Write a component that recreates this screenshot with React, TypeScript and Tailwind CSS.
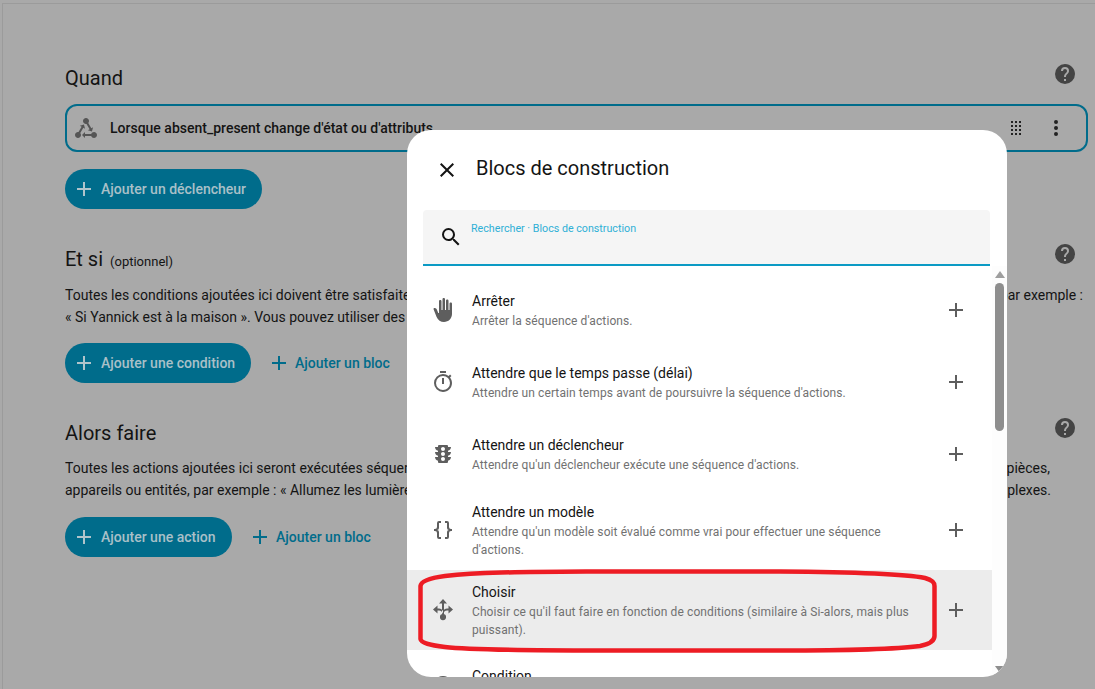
const mdi = {
  plus: "M19,13H13V19H11V13H5V11H11V5H13V11H19V13Z",
  help: "M15.07,11.25L14.17,12.17C13.45,12.89 13,13.5 13,15H11V14.5C11,13.39 11.45,12.39 12.17,11.67L13.41,10.41C13.78,10.05 14,9.55 14,9C14,7.89 13.1,7 12,7A2,2 0 0,0 10,9H8A4,4 0 0,1 12,5A4,4 0 0,1 16,9C16,9.88 15.64,10.67 15.07,11.25M13,19H11V17H13M12,2A10,10 0 0,0 2,12A10,10 0 0,0 12,22A10,10 0 0,0 22,12C22,6.47 17.5,2 12,2Z",
  dots: "M12,16A2,2 0 0,1 14,18A2,2 0 0,1 12,20A2,2 0 0,1 10,18A2,2 0 0,1 12,16M12,10A2,2 0 0,1 14,12A2,2 0 0,1 12,14A2,2 0 0,1 10,12A2,2 0 0,1 12,10M12,4A2,2 0 0,1 14,6A2,2 0 0,1 12,8A2,2 0 0,1 10,6A2,2 0 0,1 12,4Z",
  state: "M6.27 17.05C6.72 17.58 7 18.25 7 19C7 20.66 5.66 22 4 22S1 20.66 1 19 2.34 16 4 16C4.18 16 4.36 16 4.53 16.05L7.6 10.69L5.86 9.7L9.95 8.58L11.07 12.67L9.33 11.68L6.27 17.05M20 16C18.7 16 17.6 16.84 17.18 18H11V16L8 19L11 22V20H17.18C17.6 21.16 18.7 22 20 22C21.66 22 23 20.66 23 19S21.66 16 20 16M12 8C12.18 8 12.36 8 12.53 7.95L15.6 13.31L13.86 14.3L17.95 15.42L19.07 11.33L17.33 12.32L14.27 6.95C14.72 6.42 15 5.75 15 5C15 3.34 13.66 2 12 2S9 3.34 9 5 10.34 8 12 8Z",
  close: "M19,6.41L17.59,5L12,10.59L6.41,5L5,6.41L10.59,12L5,17.59L6.41,19L12,13.41L17.59,19L19,17.59L13.41,12L19,6.41Z",
  search: "M9.5,3A6.5,6.5 0 0,1 16,9.5C16,11.11 15.41,12.59 14.44,13.73L14.71,14H15.5L20.5,19L19,20.5L14,15.5V14.71L13.73,14.44C12.59,15.41 11.11,16 9.5,16A6.5,6.5 0 0,1 3,9.5A6.5,6.5 0 0,1 9.5,3M9.5,5C7,5 5,7 5,9.5C5,12 7,14 9.5,14C12,14 14,12 14,9.5C14,7 12,5 9.5,5Z",
  hand: "M13 24C9.74 24 6.81 22 5.6 19L2.57 11.37C2.26 10.58 3 9.79 3.81 10.05L4.6 10.31C5.16 10.5 5.62 10.92 5.84 11.47L7.25 15H8V3.25C8 2.56 8.56 2 9.25 2S10.5 2.56 10.5 3.25V12H11.5V1.25C11.5 .56 12.06 0 12.75 0S14 .56 14 1.25V12H15V2.75C15 2.06 15.56 1.5 16.25 1.5C16.94 1.5 17.5 2.06 17.5 2.75V12H18.5V5.75C18.5 5.06 19.06 4.5 19.75 4.5S21 5.06 21 5.75V16C21 20.42 17.42 24 13 24Z",
  timer: "M12,20A7,7 0 0,1 5,13A7,7 0 0,1 12,6A7,7 0 0,1 19,13A7,7 0 0,1 12,20M19.03,7.39L20.45,5.97C20,5.46 19.55,5 19.04,4.56L17.62,6C16.07,4.74 14.12,4 12,4A9,9 0 0,0 3,13A9,9 0 0,0 12,22C17,22 21,17.97 21,13C21,10.88 20.26,8.93 19.03,7.39M11,14H13V8H11M15,1H9V3H15V1Z",
  traffic: "M12,9A2,2 0 0,1 10,7C10,5.89 10.9,5 12,5C13.11,5 14,5.89 14,7A2,2 0 0,1 12,9M12,14A2,2 0 0,1 10,12C10,10.89 10.9,10 12,10C13.11,10 14,10.89 14,12A2,2 0 0,1 12,14M12,19A2,2 0 0,1 10,17C10,15.89 10.9,15 12,15C13.11,15 14,15.89 14,17A2,2 0 0,1 12,19M20,10H17V8.86C18.72,8.41 20,6.86 20,5H17V4A1,1 0 0,0 16,3H8A1,1 0 0,0 7,4V5H4C4,6.86 5.28,8.41 7,8.86V10H4C4,11.86 5.28,13.41 7,13.86V15H4C4,16.86 5.28,18.41 7,18.86V20A1,1 0 0,0 8,21H16A1,1 0 0,0 17,20V18.86C18.72,18.41 20,16.86 20,15H17V13.86C18.72,13.41 20,11.86 20,10Z",
  braces: "M8,3A2,2 0 0,0 6,5V9A2,2 0 0,1 4,11H3V13H4A2,2 0 0,1 6,15V19A2,2 0 0,0 8,21H10V19H8V14A2,2 0 0,0 6,12A2,2 0 0,0 8,10V5H10V3M16,3A2,2 0 0,1 18,5V9A2,2 0 0,0 20,11H21V13H20A2,2 0 0,0 18,15V19A2,2 0 0,1 16,21H14V19H16V14A2,2 0 0,1 18,12A2,2 0 0,1 16,10V5H14V3H16Z",
  choose: "M12 1L8 5.5H11V16.5H13V5.5H16ZM2 11.5L6.5 7.5V10.5H8C10 10.5 11 11.7 12 13V15.8C11 13.7 10 12.5 8 12.5H6.5V15.5ZM22 11.5L17.5 7.5V10.5H16C14 10.5 13 11.7 12 13V15.8C13 13.7 14 12.5 16 12.5H17.5V15.5ZM12 16A3.1 3.1 0 1 0 12 22.2A3.1 3.1 0 1 0 12 16Z",
  drag: "M7,19V17H9V19H7M11,19V17H13V19H11M15,19V17H17V19H15M7,15V13H9V15H7M11,15V13H13V15H11M15,15V13H17V15H15M7,11V9H9V11H7M11,11V9H13V11H11M15,11V9H17V11H15M7,7V5H9V7H7M11,7V5H13V7H11M15,7V5H17V7H15Z",
};

function Icon({ d, className }: { d: string; className: string }) {
  return (
    <svg viewBox="0 0 24 24" className={className} fill="currentColor">
      <path d={d} />
    </svg>
  );
}

function Filled({ label, width }: { label: string; width: string }) {
  return (
    <div className={`h-10 rounded-full bg-[#006c8b] text-[#a9c0c8] flex items-center pl-2 ${width}`}>
      <Icon d={mdi.plus} className="w-6 h-6 text-[#b0c4cb] mr-[4px] ml-[-1px]" />
      <span className="text-sm font-medium whitespace-nowrap ml-[1px]">{label}</span>
    </div>
  );
}

function TextBtn({ label }: { label: string }) {
  return (
    <div className="h-10 ml-[16px] flex items-center text-[#006c8b]">
      <Icon d={mdi.plus} className="w-6 h-6 mr-[3px]" />
      <span className="text-sm font-medium whitespace-nowrap ml-[1px]">{label}</span>
    </div>
  );
}

const items = [
  { icon: mdi.hand, title: "Arrêter", lines: ["Arrêter la séquence d'actions."], h: "h-[72px]" },
  { icon: mdi.timer, title: "Attendre que le temps passe (délai)", lines: ["Attendre un certain temps avant de poursuivre la séquence d'actions."], h: "h-[72px]" },
  { icon: mdi.traffic, title: "Attendre un déclencheur", lines: ["Attendre qu'un déclencheur exécute une séquence d'actions."], h: "h-[72px]" },
  { icon: mdi.braces, title: "Attendre un modèle", lines: ["Attendre qu'un modèle soit évalué comme vrai pour effectuer une séquence", "d'actions."], h: "h-[80px]" },
  { icon: mdi.choose, title: "Choisir", lines: ["Choisir ce qu'il faut faire en fonction de conditions (similaire à Si-alors, mais plus", "puissant)."], h: "h-[80px]", active: true },
];

export default function App() {
  return (
    <div className="relative w-[1095px] h-[689px] overflow-hidden bg-[#a9a9a9] text-[#141414] [font-family:Roboto,sans-serif]">
      <div className="h-full ml-[2px] mt-[3px] border-l border-t border-[#9b9b9b] pl-[62px] pr-[7px] pt-[58px]">
        <div className="flex items-start justify-between pr-[11px] h-8">
          <h2 className="text-[20px] leading-8 font-normal">Quand</h2>
          <Icon d={mdi.help} className="w-6 h-6 text-[#444444] shrink-0" />
        </div>
        <div className="mt-[10px] h-[48px] w-[1023px] rounded-[12px] border-2 border-[#006c8b] flex items-center pl-[7px] pr-[18px]">
          <Icon d={mdi.state} className="w-6 h-6 text-[#555555]" />
          <span className="ml-[12px] mt-[-1px] text-sm font-medium whitespace-nowrap">Lorsque absent_present change d'état ou d'attributs</span>
          <Icon d={mdi.drag} className="w-6 h-6 ml-auto mr-[16px] text-[#222222]" />
          <Icon d={mdi.dots} className="w-6 h-6 text-[#222222]" />
        </div>
        <div className="mt-[17px] flex"><Filled label="Ajouter un déclencheur" width="w-[197px]" /></div>

        <div className="mt-[34px] flex items-start justify-between pr-[11px] h-8">
          <h2 className="text-[20px] leading-8 font-normal">Et si <span className="text-[13px] ml-[2px]">(optionnel)</span></h2>
          <Icon d={mdi.help} className="w-6 h-6 mt-[-1px] text-[#444444] shrink-0" />
        </div>
        <div className="mt-[9px] text-sm leading-[22px] w-[1018px]">
          <div className="flex justify-between whitespace-nowrap"><span>Toutes les conditions ajoutées ici doivent être satisfaites</span><span>par exemple :</span></div>
          <div className="whitespace-nowrap">« Si Yannick est à la maison ». Vous pouvez utiliser des</div>
        </div>
        <div className="mt-[15px] flex">
          <Filled label="Ajouter une condition" width="w-[186px]" />
          <TextBtn label="Ajouter un bloc" />
        </div>

        <div className="mt-[34px] flex items-start justify-between pr-[11px] h-8">
          <h2 className="text-[20px] leading-8 font-normal">Alors faire</h2>
          <Icon d={mdi.help} className="w-6 h-6 mt-[-1px] text-[#444444] shrink-0" />
        </div>
        <div className="mt-[8px] text-sm leading-[22px] w-[986px]">
          <div className="flex justify-between whitespace-nowrap pr-[1px]"><span>Toutes les actions ajoutées ici seront exécutées séquentiellement</span><span>pièces,</span></div>
          <div className="flex justify-between whitespace-nowrap"><span>appareils ou entités, par exemple : « Allumez les lumières</span><span>plexes.</span></div>
        </div>
        <div className="mt-[16px] flex">
          <Filled label="Ajouter une action" width="w-[167px]" />
          <TextBtn label="Ajouter un bloc" />
        </div>
      </div>

      <div className="absolute left-[407px] top-[130px] w-[600px] h-[547px] bg-white rounded-[24px] overflow-hidden flex flex-col">
        <div className="h-[80px] shrink-0 flex items-center pl-[28px]">
          <Icon d={mdi.close} className="w-6 h-6 text-[#141414]" />
          <h2 className="ml-[17px] mt-[-4px] text-[20px] font-normal text-[#141414]">Blocs de construction</h2>
        </div>
        <div className="ml-[16px] w-[567px] h-[56px] shrink-0 bg-[#f5f5f5] rounded-t-[4px] border-b-2 border-[#0b9ac4] flex pl-[16px] pt-[6px]">
          <Icon d={mdi.search} className="w-6 h-6 mt-[9px] text-[#141414]" />
          <span className="ml-[8px] mt-[7px] text-[10.7px] leading-[12px] text-[#2fb0d6] whitespace-nowrap">Rechercher · Blocs de construction</span>
        </div>
        <div className="flex-1 min-h-0 flex pt-[8px]">
          <div className="w-[585px] shrink-0 overflow-hidden">
            {items.map((it) => (
              <div key={it.title} className={`${it.h} flex items-center pl-[24px] pr-[24px] ${it.active ? "bg-[#ececec]" : ""}`}>
                <Icon d={it.icon} className="w-6 h-6 shrink-0 text-[#5e5e5e]" />
                <div className="ml-[17px] flex-1 min-w-0">
                  <div className="text-sm leading-[20px] text-[#141414]">{it.title}</div>
                  <div className="mt-[1px] mb-[-1px]">
                    {it.lines.map((l) => (
                      <div key={l} className="text-xs leading-[18px] tracking-[0.1px] text-[#717171] whitespace-nowrap">{l}</div>
                    ))}
                  </div>
                </div>
                <Icon d={mdi.plus} className="w-6 h-6 shrink-0 text-[#5e5e5e]" />
              </div>
            ))}
            <div className="h-[60px] flex pl-[24px] pt-[16px]">
              <Icon d={mdi.help} className="w-6 h-6 mt-[8px] shrink-0 text-[#5e5e5e]" />
              <div className="ml-[17px] text-sm leading-[20px] text-[#141414]">Condition</div>
            </div>
          </div>
          <div className="relative w-[15px] shrink-0 bg-[#fdfdfd] mt-[-8px]">
            <div className="absolute left-[3px] top-[5px] w-0 h-0 border-x-[5px] border-x-transparent border-b-[7px] border-b-[#9e9e9e]" />
            <div className="absolute left-[3px] top-[17px] w-[9px] h-[148px] rounded-full bg-[#8e8e8e]" />
            <div className="absolute left-[3px] bottom-[4px] w-0 h-0 border-x-[5px] border-x-transparent border-t-[7px] border-t-[#8e8e8e]" />
          </div>
        </div>
      </div>

      <svg className="absolute left-0 top-0 w-[1095px] h-[689px] pointer-events-none" viewBox="0 0 1095 689" fill="none">
        <path d="M420.5 586 C421 581 430 578 445 576 C480 572 520 572 600 571.5 L780 571.5 C850 572 905 574 925 578 C932 580 934.5 582 934.5 586 L934.5 636 C934.5 641 930 644 920 646 C890 650 840 650.5 780 650.5 L600 650.5 C520 650.5 470 650 445 647 C430 645 421 643 420.5 639 Z" stroke="#ed1c24" strokeWidth="4.5" />
      </svg>
    </div>
  );
}
